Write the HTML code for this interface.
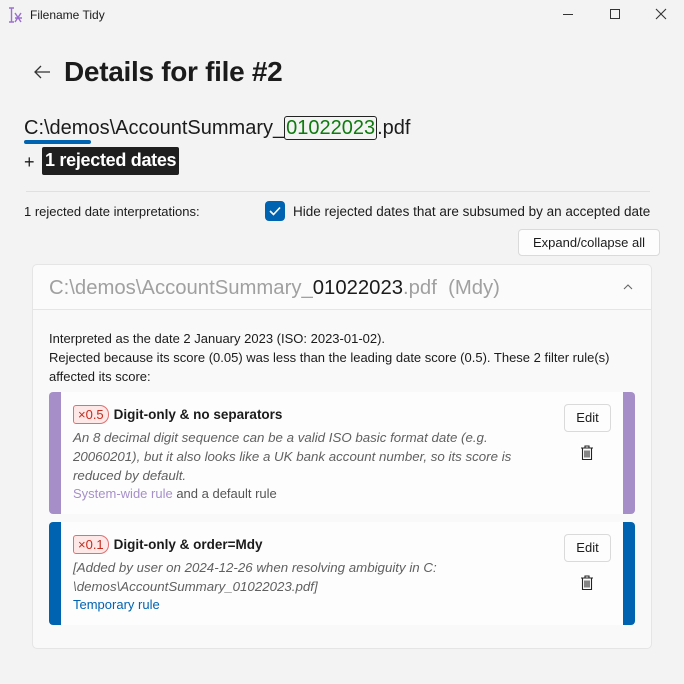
<!DOCTYPE html>
<html><head><style>
*{box-sizing:border-box;margin:0;padding:0}
body{width:684px;height:684px;background:#f3f3f3;font-family:"Liberation Sans",sans-serif;color:#1b1b1b;position:relative;overflow:hidden}
.a{position:absolute;white-space:nowrap}
.s13{font-size:13px}
.btn{position:absolute;background:#fdfdfd;border:1px solid #dadada;border-radius:4px;font-size:13px;text-align:center}
.rule{position:absolute;left:49px;width:586px;background:#fdfdfd;border-radius:4px;overflow:hidden}
.bar{position:absolute;top:0;bottom:0;width:12px}
.badge{display:inline-block;border:1px solid #e07070;background:#fde7e7;color:#c42b1c;border-radius:3px 9px 9px 3px;padding:1px 4px;font-size:13px;margin-right:5px;font-weight:normal}
.it{font-style:italic;color:#606060;font-size:13.3px;line-height:19px}
</style></head><body>
<svg class="a" style="left:7px;top:6px" width="18" height="18" viewBox="0 0 18 18"><path d="M2 2h5M4.5 2v14M2 16h5M8 7l6 9M14 7l-6 9M8 12h7" stroke="#9a6fd0" stroke-width="1.4" fill="none"/></svg>
<div class="a" style="left:30px;top:8px;font-size:12px">Filename Tidy</div>
<div class="a" style="left:563px;top:14px;width:10px;height:1px;background:#333"></div>
<div class="a" style="left:610px;top:9px;width:10px;height:10px;border:1px solid #333"></div>
<svg class="a" style="left:655px;top:8px" width="12" height="12"><path d="M1 1l10 10M11 1L1 11" stroke="#333" stroke-width="1.1"/></svg>
<svg class="a" style="left:33px;top:64px" width="18" height="16"><path d="M2 8h15M8 2L2 8l6 6" stroke="#333" stroke-width="1.3" fill="none"/></svg>
<div class="a" style="left:64px;top:56px;font-size:28px;font-weight:bold;letter-spacing:-0.3px">Details for file #2</div>
<div class="a" style="left:24px;top:117px;font-size:20px">C:\demos\AccountSummary_<span style="border:1px solid #222;border-radius:3px;color:#0f7b0f;padding:0 1px">01022023</span>.pdf</div>
<div class="a" style="left:24px;top:140px;width:67px;height:4px;background:#0063b1;border-radius:2px"></div>
<div class="a" style="left:24px;top:152px;font-size:18px">+</div>
<div class="a" style="left:42px;top:147px;background:#1f1f1f;color:#fff;font-size:18px;font-weight:bold;padding:3px 3px;border-radius:2px;height:28px;letter-spacing:-0.3px">1 rejected dates</div>
<div class="a" style="left:26px;top:191px;width:624px;height:1px;background:#e0e0e0"></div>
<div class="a s13" style="left:24px;top:204px">1 rejected date interpretations:</div>
<div class="a" style="left:265px;top:201px;width:20px;height:20px;background:#0063b1;border-radius:4px"></div>
<svg class="a" style="left:268px;top:204px" width="14" height="14"><path d="M2 7l3.5 3.5L12 3.5" stroke="#fff" stroke-width="1.6" fill="none"/></svg>
<div class="a" style="left:293px;top:204px;font-size:13.5px">Hide rejected dates that are subsumed by an accepted date</div>
<div class="btn" style="left:518px;top:229px;width:142px;height:27px;line-height:25px">Expand/collapse all</div>
<div class="a" style="left:32px;top:264px;width:620px;height:385px;border:1px solid #e5e5e5;border-radius:5px;background:#f9f9f9"></div>
<div class="a" style="left:33px;top:265px;width:618px;height:45px;background:#fbfbfb;border-bottom:1px solid #e5e5e5;border-radius:5px 5px 0 0"></div>
<div class="a" style="left:49px;top:277px;font-size:20.3px;color:#a0a0a0">C:\demos\AccountSummary_<span style="color:#1b1b1b">01022023</span>.pdf&nbsp; (Mdy)</div>
<svg class="a" style="left:623px;top:283px" width="10" height="7"><path d="M1 6l4-4 4 4" stroke="#666" stroke-width="1.1" fill="none"/></svg>
<div class="a s13" style="left:49px;top:329px;line-height:19px">Interpreted as the date 2 January 2023 (ISO: 2023-01-02).<br>Rejected because its score (0.05) was less than the leading date score (0.5). These 2 filter rule(s)<br>affected its score:</div>
<div class="rule" style="top:392px;height:122px">
<div class="bar" style="left:0;background:#a68fc9"></div><div class="bar" style="right:0;background:#a68fc9"></div>
<div class="a" style="left:24px;top:13px;font-size:13.5px;font-weight:bold"><span class="badge">×0.5</span>Digit-only &amp; no separators</div>
<div class="a it" style="left:24px;top:36px">An 8 decimal digit sequence can be a valid ISO basic format date (e.g.<br>20060201), but it also looks like a UK bank account number, so its score is<br>reduced by default.</div>
<div class="a s13" style="left:24px;top:94px;color:#555"><span style="color:#a68fc9">System-wide rule</span> and a default rule</div>
<div class="btn" style="left:515px;top:12px;width:47px;height:28px;line-height:26px">Edit</div>
<svg class="a" style="left:531px;top:53px" width="14" height="16"><path d="M1 3h12M5 3V1h4v2M2.5 3.5v11h9v-11M5 5.5v7M7 5.5v7M9 5.5v7" stroke="#222" stroke-width="1.1" fill="none"/></svg>
</div>
<div class="rule" style="top:522px;height:103px">
<div class="bar" style="left:0;background:#0063b1"></div><div class="bar" style="right:0;background:#0063b1"></div>
<div class="a" style="left:24px;top:13px;font-size:13.5px;font-weight:bold"><span class="badge">×0.1</span>Digit-only &amp; order=Mdy</div>
<div class="a it" style="left:24px;top:36px">[Added by user on 2024-12-26 when resolving ambiguity in C:<br>\demos\AccountSummary_01022023.pdf]</div>
<div class="a s13" style="left:24px;top:75px;color:#0063b1">Temporary rule</div>
<div class="btn" style="left:515px;top:12px;width:47px;height:28px;line-height:26px">Edit</div>
<svg class="a" style="left:531px;top:53px" width="14" height="16"><path d="M1 3h12M5 3V1h4v2M2.5 3.5v11h9v-11M5 5.5v7M7 5.5v7M9 5.5v7" stroke="#222" stroke-width="1.1" fill="none"/></svg>
</div>
</body></html>
